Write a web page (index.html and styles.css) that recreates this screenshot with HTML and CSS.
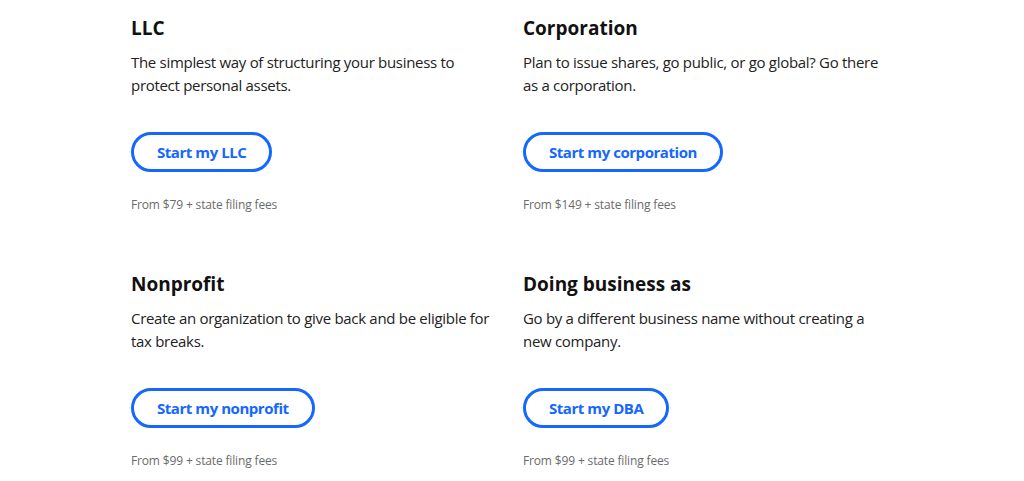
FILE: index.html
```html
<!DOCTYPE html>
<html lang="en">
<head>
<meta charset="utf-8">
<title>Start your business</title>
<link rel="stylesheet" href="styles.css">
</head>
<body>
<main class="entities">
  <section class="entity">
    <h2 class="entity-title">LLC</h2>
    <p class="entity-desc">The simplest way of structuring your business to protect personal assets.</p>
    <a class="entity-btn" href="#">Start my LLC</a>
    <p class="entity-price">From $79 + state filing fees</p>
  </section>
  <section class="entity">
    <h2 class="entity-title">Corporation</h2>
    <p class="entity-desc">Plan to issue shares, go public, or go global? Go there as a corporation.</p>
    <a class="entity-btn" href="#">Start my corporation</a>
    <p class="entity-price">From $149 + state filing fees</p>
  </section>
  <section class="entity">
    <h2 class="entity-title">Nonprofit</h2>
    <p class="entity-desc">Create an organization to give back and be eligible for tax breaks.</p>
    <a class="entity-btn" href="#">Start my nonprofit</a>
    <p class="entity-price">From $99 + state filing fees</p>
  </section>
  <section class="entity">
    <h2 class="entity-title">Doing business as</h2>
    <p class="entity-desc">Go by a different business name without creating a new company.</p>
    <a class="entity-btn" href="#">Start my DBA</a>
    <p class="entity-price">From $99 + state filing fees</p>
  </section>
</main>
</body>
</html>
```
FILE: styles.css
```css
* { box-sizing: border-box; }
html, body { margin: 0; padding: 0; background: #fff; }
body {
  font-family: "Open Sans", "Liberation Sans", sans-serif;
  color: #222;
  overflow: hidden;
}
.entities {
  width: 762px;
  margin: 0 auto;
  padding-top: 14px;
  display: grid;
  grid-template-columns: 370px 370px;
  column-gap: 22px;
}
.entity {
  display: flex;
  flex-direction: column;
  align-items: flex-start;
  height: 256px;
}
.entity-title {
  margin: 0;
  font-size: 19px;
  line-height: 28px;
  font-weight: 700;
  color: #111;
}
.entity-desc {
  margin: 9px 0 0;
  max-width: 366px;
  font-size: 15px;
  line-height: 23px;
  letter-spacing: -0.3px;
  color: #222;
}
.entity-btn {
  margin-top: 35px;
  height: 40px;
  padding: 0 23px;
  display: inline-flex;
  align-items: center;
  border: 3px solid #1467ff;
  border-radius: 20px;
  color: #1467ff;
  font-size: 15px;
  font-weight: 700;
  letter-spacing: -0.45px;
  text-decoration: none;
}
.entity-price {
  margin: 24px 0 0;
  font-size: 12px;
  line-height: 18px;
  letter-spacing: -0.15px;
  color: #6b6b6b;
}
```
